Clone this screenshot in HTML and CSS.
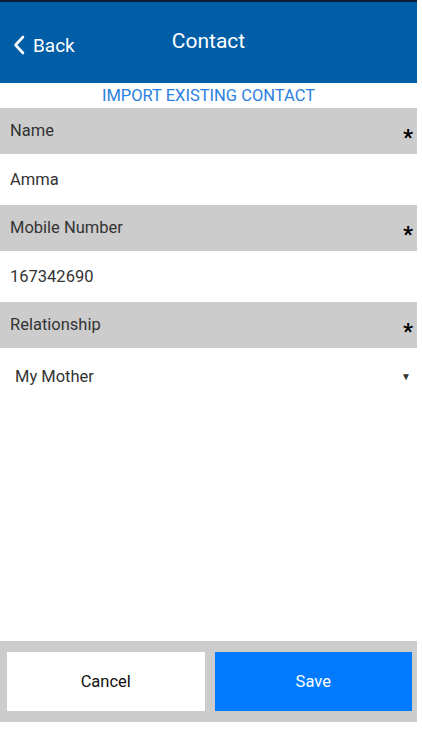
FILE: index.html
```html
<!DOCTYPE html>
<html lang="en">
<head>
    <meta charset="UTF-8">
    <meta name="viewport" content="width=device-width, initial-scale=1.0">
    <title>Contact</title>
    <link rel="stylesheet" href="styles.css">
</head>
<body>
    <div class="app">
        <div class="status"></div>
        <header class="topbar">
            <a class="back" href="#">
                <svg width="12" height="20" viewBox="0 0 12 20"><path d="M10 2 L2.5 10 L10 18" fill="none" stroke="#fff" stroke-width="2.6" stroke-linecap="round" stroke-linejoin="round"/></svg>
                <span>Back</span>
            </a>
            <h1 class="title">Contact</h1>
            <span></span>
        </header>

        <a class="import" href="#">IMPORT EXISTING CONTACT</a>

        <div class="field-label"><span>Name</span><b class="req">*</b></div>
        <div class="field-value">Amma</div>

        <div class="field-label"><span>Mobile Number</span><b class="req">*</b></div>
        <div class="field-value">167342690</div>

        <div class="field-label"><span>Relationship</span><b class="req">*</b></div>
        <div class="field-value select">
            <span>My Mother</span>
            <span class="arrow">&#9660;</span>
        </div>

        <div class="spacer"></div>

        <div class="actions">
            <button class="btn cancel">Cancel</button>
            <button class="btn save">Save</button>
        </div>
        <div class="bottom"></div>
    </div>
</body>
</html>
```

FILE: styles.css
```css
body {
    margin: 0;
    padding: 0;
    font-family: Roboto, "Liberation Sans", sans-serif;
    background: #fff;
    overflow: hidden;
}

.app {
    width: 417px;
    height: 750px;
    display: flex;
    flex-direction: column;
}

.status {
    height: 2px;
    background: #0c1c30;
}

.topbar {
    height: 81px;
    background: #005ea7;
    display: grid;
    grid-template-columns: 1fr auto 1fr;
    align-items: center;
    color: #fff;
}

.back {
    display: flex;
    align-items: center;
    gap: 8px;
    padding-left: 13px;
    margin-top: 5px;
    color: #fff;
    text-decoration: none;
    font-size: 19px;
}

.title {
    margin: -3px 0 0;
    font-size: 21px;
    font-weight: 400;
}

.import {
    height: 25px;
    line-height: 25px;
    text-align: center;
    color: #2a80e0;
    font-size: 16.5px;
    text-decoration: none;
}

.field-label {
    height: 46px;
    background: #cccccc;
    display: flex;
    justify-content: space-between;
    padding: 0 4px 0 10px;
    color: #333;
    font-size: 16.5px;
}

.field-label span {
    padding-top: 13px;
}

.req {
    color: #000;
    font-size: 22px;
    padding-top: 17px;
}

.field-value {
    height: 51px;
    display: flex;
    align-items: center;
    padding: 0 10px;
    color: #333;
    font-size: 16.5px;
}

.select {
    justify-content: space-between;
    padding: 5px 6px 0 15px;
    height: 46px;
}

.arrow {
    font-size: 10px;
    color: #333;
}

.spacer {
    flex: 1;
}

.actions {
    height: 59px;
    background: #cccccc;
    display: flex;
    gap: 10px;
    padding: 11px 5px 11px 7px;
}

.btn {
    flex: 1;
    border: none;
    font-family: inherit;
    font-size: 16.5px;
    cursor: pointer;
}

.cancel {
    background: #fff;
    color: #111;
}

.save {
    background: #007aff;
    color: #fff;
}

.bottom {
    height: 28px;
}
```
